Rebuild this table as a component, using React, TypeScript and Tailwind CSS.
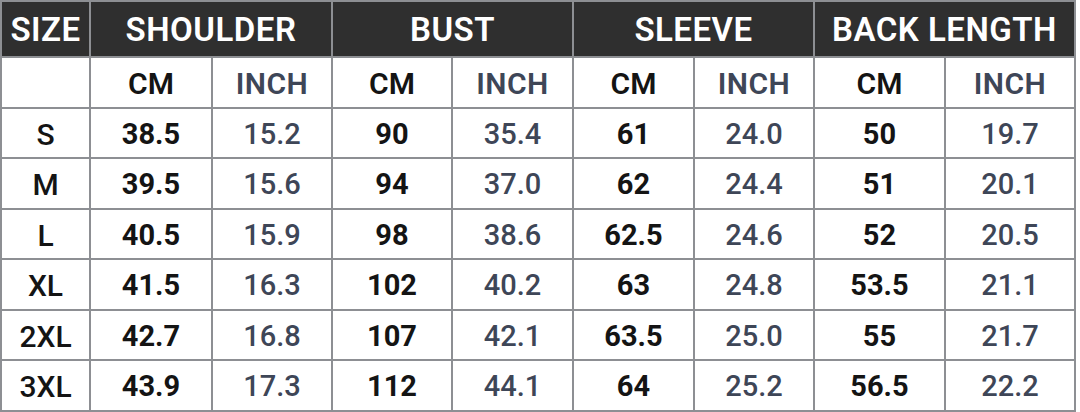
import React from "react";

const groups = ["SHOULDER", "BUST", "SLEEVE", "BACK LENGTH"];

const rows: [string, string[]][] = [
  ["S", ["38.5", "15.2", "90", "35.4", "61", "24.0", "50", "19.7"]],
  ["M", ["39.5", "15.6", "94", "37.0", "62", "24.4", "51", "20.1"]],
  ["L", ["40.5", "15.9", "98", "38.6", "62.5", "24.6", "52", "20.5"]],
  ["XL", ["41.5", "16.3", "102", "40.2", "63", "24.8", "53.5", "21.1"]],
  ["2XL", ["42.7", "16.8", "107", "42.1", "63.5", "25.0", "55", "21.7"]],
  ["3XL", ["43.9", "17.3", "112", "44.1", "64", "25.2", "56.5", "22.2"]],
];

export default function App() {
  return (
    <div
      className="w-[1080px] h-[412px] bg-white"
      style={{ fontFamily: "Roboto, 'Liberation Sans', sans-serif" }}
    >
      <div className="grid w-[1076px] grid-cols-[87px_120px_118px_118px_119px_119px_118px_129px_128px] grid-rows-[54px_repeat(7,48.5px)] gap-[2px] p-[2px] bg-[#8d8f93]">
        {/* header */}
        <div className="flex items-center justify-center pt-[2px] bg-[#2f2f2f] text-white text-[33px] font-semibold tracking-[0.5px]">
          SIZE
        </div>
        {groups.map((g) => (
          <div
            key={g}
            className="col-span-2 flex items-center justify-center pt-[2px] bg-[#2f2f2f] text-white text-[33px] font-semibold tracking-[0.5px]"
          >
            {g}
          </div>
        ))}

        {/* sub header */}
        <div className="bg-white"></div>
        {groups.map((g) => (
          <React.Fragment key={g + "-sub"}>
            <div className="flex items-center justify-center pt-[3px] bg-white text-[#141414] text-[30px] font-semibold">
              CM
            </div>
            <div className="flex items-center justify-center pt-[3px] bg-white text-[#3e4657] text-[30px] font-semibold tracking-[0.5px]">
              INCH
            </div>
          </React.Fragment>
        ))}

        {/* data */}
        {rows.map(([size, vals]) => (
          <React.Fragment key={size}>
            <div className="flex items-center justify-center pt-[3px] bg-white text-[#141414] text-[30px] font-medium">
              {size}
            </div>
            {vals.map((v, i) => (
              <div
                key={i}
                className={
                  i % 2 === 0
                    ? "flex items-center justify-center pt-[3px] bg-white text-[#141414] text-[29px] font-bold"
                    : "flex items-center justify-center pt-[3px] bg-white text-[#3e4657] text-[29px] font-medium"
                }
              >
                {v}
              </div>
            ))}
          </React.Fragment>
        ))}
      </div>
    </div>
  );
}
